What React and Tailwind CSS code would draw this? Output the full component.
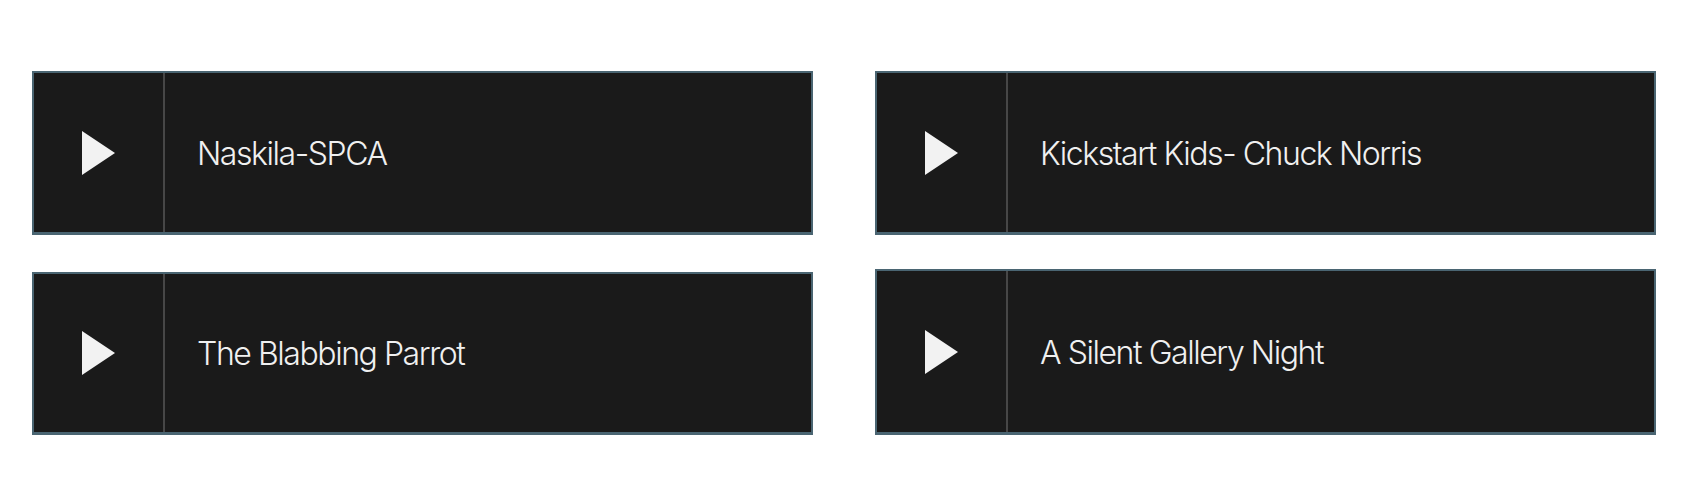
import React from "react";

function Play() {
  return (
    <svg width="34" height="44" viewBox="0 0 34 44" className="block">
      <polygon points="0,0 33,22 0,44" fill="#f2f2f2" />
    </svg>
  );
}

function Card({ title, h }) {
  return (
    <div
      className={`flex ${h} bg-[#1a1a1a] border-2 border-[#4a6572] border-b-[3px]`}
    >
      <div className="flex w-[131px] shrink-0 items-center justify-center border-r-2 border-[#474747]">
        <div className="ml-[1px]">
          <Play />
        </div>
      </div>
      <div className="flex items-center pl-[32px] pt-[2px]">
        <span className="text-[32px] leading-none font-light tracking-[-0.045em] text-[#f0f0f0] [font-family:Inter,'Liberation_Sans',sans-serif]">
          {title}
        </span>
      </div>
    </div>
  );
}

export default function App() {
  return (
    <div className="w-[1708px] h-[498px] bg-white pl-[32px] pt-[71px]">
      <div className="grid grid-cols-[781px_781px] gap-x-[62px] gap-y-[34px] items-end">
        <Card title="Naskila-SPCA" h="h-[164px]" />
        <Card title="Kickstart Kids- Chuck Norris" h="h-[164px]" />
        <Card title="The Blabbing Parrot" h="h-[163px]" />
        <Card title="A Silent Gallery Night" h="h-[166px]" />
      </div>
    </div>
  );
}
